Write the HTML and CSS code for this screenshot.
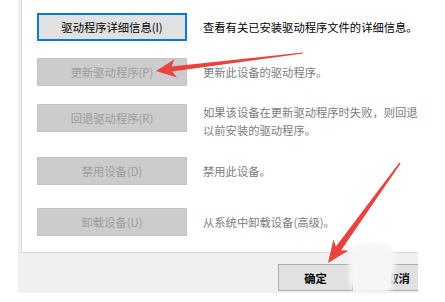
FILE: index.html
```html
<!DOCTYPE html>
<html lang="zh">
<head>
<meta charset="utf-8">
<link rel="stylesheet" href="styles.css">
</head>
<body>
<div class="frame">
  <div class="panel">
    <div class="row r1">
      <div class="btn btn-focus">驱动程序详细信息(I)</div>
      <div class="desc desc-on">查看有关已安装驱动程序文件的详细信息。</div>
    </div>
    <div class="row r2">
      <div class="btn btn-off">更新驱动程序(P)</div>
      <div class="desc">更新此设备的驱动程序。</div>
    </div>
    <div class="row r3 top">
      <div class="btn btn-off">回退驱动程序(R)</div>
      <div class="desc two">如果该设备在更新驱动程序时失败，则回退<br>以前安装的驱动程序。</div>
    </div>
    <div class="row r4">
      <div class="btn btn-off">禁用设备(D)</div>
      <div class="desc">禁用此设备。</div>
    </div>
    <div class="row r5">
      <div class="btn btn-off">卸载设备(U)</div>
      <div class="desc">从系统中卸载设备(高级)。</div>
    </div>
  </div>
  <div class="actions">
    <div class="btn btn-dlg">确定</div>
    <div class="btn btn-dlg">取消</div>
  </div>
</div>
<div class="blob"></div>
<svg class="marks" width="445" height="302" viewBox="0 0 445 302">
  <polygon fill="#e8443f" points="156,71 177,77.5 172.2,71.6 303.1,53.6 302.9,52.4 171.6,66.4 174.5,59.3"/>
  <polygon fill="#e8443f" points="328,263 348.4,250.6 341.2,250.3 400.6,163.5 399.4,162.5 335.9,246.5 333.4,239.6"/>
</svg>
</body>
</html>
```
FILE: styles.css
```css
html, body {
  margin: 0;
  padding: 0;
}
body {
  width: 445px;
  height: 302px;
  overflow: hidden;
  background: #ffffff;
  position: relative;
  font-family: "Noto Sans CJK SC", "Noto Sans", sans-serif;
  font-size: 11.3px;
}
.frame {
  margin-left: 18px;
  width: 400px;
  height: 293px;
  background: #f0f0f0;
  overflow: hidden;
  display: flex;
  flex-direction: column;
}
.panel {
  margin-left: 3px;
  width: 420px;
  height: 253px;
  box-sizing: border-box;
  background: #ffffff;
  border-left: 1px solid #dadada;
  border-bottom: 1px solid #dadada;
  padding: 13px 0 0 15px;
  display: flex;
  flex-direction: column;
}
.row {
  display: flex;
  align-items: center;
  gap: 16px;
}
.row.top {
  align-items: flex-start;
}
.r2 { margin-top: 17px; }
.r3 { margin-top: 18px; }
.r4 { margin-top: 18px; }
.r5 { margin-top: 23px; }
.btn {
  box-sizing: border-box;
  width: 150px;
  height: 28px;
  display: flex;
  align-items: center;
  justify-content: center;
  flex: none;
  white-space: nowrap;
}
.btn-focus {
  background: #e1e1e1;
  border: 2px solid #0a78d4;
  color: #000000;
}
.btn-off {
  background: #cccccc;
  border: 1px solid #c4c4c4;
  color: #9d9d9d;
}
.desc {
  color: #7d7d7d;
  white-space: nowrap;
}
.desc-on {
  color: #000000;
}
.desc.two {
  line-height: 18px;
  margin-top: -1px;
}
.actions {
  display: flex;
  gap: 8px;
  padding: 11px 0 0 260px;
}
.btn-dlg {
  width: 75px;
  height: 27px;
  background: #e1e1e1;
  border: 1px solid #adadad;
  color: #000000;
  font-weight: 700;
}
.blob {
  position: absolute;
  left: 349px;
  top: 243px;
  width: 46px;
  height: 50px;
  background: #f6f6f6;
  border-radius: 14px;
  filter: blur(2px);
}
.marks {
  position: absolute;
  left: 0;
  top: 0;
}
```
